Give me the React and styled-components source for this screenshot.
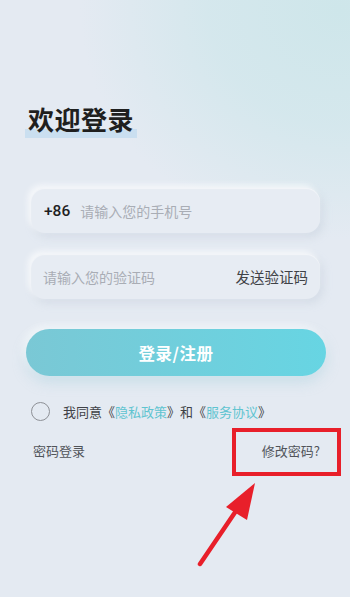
import React from "react";
import styled, { createGlobalStyle } from "styled-components";

const Global = createGlobalStyle`
  html, body { margin: 0; padding: 0; }
  body { font-family: "Noto Sans CJK SC", "Noto Sans", sans-serif; }
  * { box-sizing: border-box; }
`;

const Page = styled.div`
  position: relative;
  width: 350px;
  height: 597px;
  overflow: hidden;
  background:
    radial-gradient(ellipse 260px 230px at 340px 10px, rgba(206, 230, 234, 1) 0%, rgba(210, 231, 236, 0.85) 50%, rgba(228, 234, 242, 0) 100%),
    #e4eaf2;
  padding: 102px 30px 0 31px;
  display: flex;
  flex-direction: column;
`;

const Title = styled.h1`
  margin: 0 0 0 -6px;
  padding: 0 3px;
  align-self: flex-start;
  font-size: 26px;
  line-height: 34px;
  font-weight: 600;
  color: #1f1f1f;
  letter-spacing: 0.5px;
  background: linear-gradient(to bottom, transparent 0, transparent 27px, #cadff0 27px, #cadff0 36px, transparent 36px);
  height: 38px;
`;

const Form = styled.div`
  margin-top: 48px;
  display: flex;
  flex-direction: column;
  gap: 21px;
`;

const Field = styled.div`
  height: 45px;
  border-radius: 14px;
  background: #e7ecf3;
  box-shadow: -3px -3px 6px rgba(255, 255, 255, 0.7), 3px 4px 8px rgba(190, 199, 214, 0.4), inset 0 1px 1px rgba(255,255,255,0.5);
  display: flex;
  align-items: center;
  padding: 0 12px 0 ${(p) => p.$pl || 13}px;
  font-size: 14px;
`;

const Prefix = styled.span`
  font-family: "Roboto", "Noto Sans", sans-serif;
  font-size: 15.5px;
  font-weight: 500;
  color: #1f1f1f;
  margin-right: 10px;
`;

const Placeholder = styled.span`
  color: #a9adb5;
  flex: 1;
  font-size: 14px;
`;

const SendCode = styled.span`
  color: #3f4247;
  font-size: 14.5px;
`;

const Submit = styled.button`
  margin: 30px -6px 0 -5px;
  height: 47px;
  border: none;
  border-radius: 24px;
  background: linear-gradient(to right, #7ac8d5, #67d5e3);
  box-shadow: 0 6px 14px rgba(150, 200, 215, 0.35), -3px -3px 8px rgba(255,255,255,0.7);
  color: #ffffff;
  font-family: inherit;
  font-size: 16.5px;
  font-weight: 700;
  letter-spacing: 0.5px;
`;

const AgreeRow = styled.div`
  margin-top: 26px;
  display: flex;
  align-items: center;
  font-size: 13px;
  color: #3f4247;
`;

const Circle = styled.span`
  width: 19px;
  height: 19px;
  border-radius: 50%;
  border: 1.3px solid #8d9096;
  margin-right: 13px;
  flex-shrink: 0;
`;

const Link = styled.span`
  color: #5fc4d0;
`;

const BottomRow = styled.div`
  margin-top: 20px;
  display: flex;
  justify-content: space-between;
  font-size: 13px;
  color: #50545a;
  padding: 0 0 0 2px;
`;

const Highlight = styled.div`
  position: absolute;
  left: 232px;
  top: 428px;
  width: 109px;
  height: 48px;
  border: 4px solid #e81f2a;
`;

const Arrow = styled.svg`
  position: absolute;
  left: 0;
  top: 0;
  pointer-events: none;
`;

export default function App() {
  return (
    <>
      <Global />
      <Page>
        <Title>欢迎登录</Title>
        <Form>
          <Field $pl={13}>
            <Prefix>+86</Prefix>
            <Placeholder>请输入您的手机号</Placeholder>
          </Field>
          <Field $pl={12}>
            <Placeholder>请输入您的验证码</Placeholder>
            <SendCode>发送验证码</SendCode>
          </Field>
        </Form>
        <Submit>登录/注册</Submit>
        <AgreeRow>
          <Circle />
          我同意《<Link>隐私政策</Link>》和《<Link>服务协议</Link>》
        </AgreeRow>
        <BottomRow>
          <span>密码登录</span>
          <span>修改密码?</span>
        </BottomRow>
        <Highlight />
        <Arrow width="350" height="597" viewBox="0 0 350 597">
          <line x1="200" y1="564" x2="240" y2="505" stroke="#e81f2a" strokeWidth="4.5" strokeLinecap="round" />
          <polygon points="255,483 226,507 247,520" fill="#e81f2a" />
        </Arrow>
      </Page>
    </>
  );
}
